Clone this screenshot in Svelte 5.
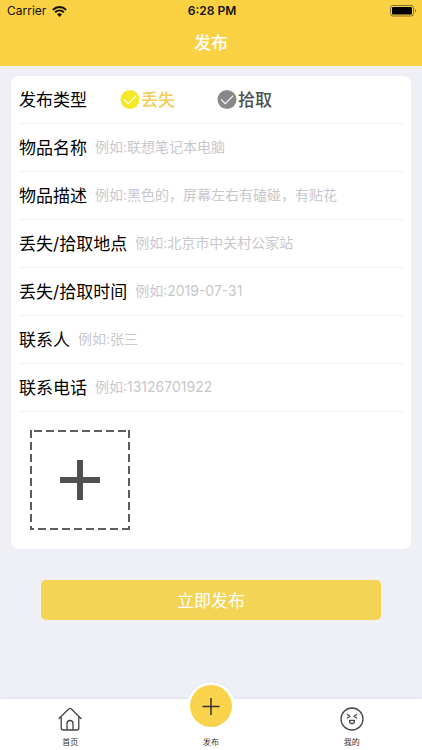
<script>
  const fields = [
    { id: 'name', label: '物品名称', hint: '例如:联想笔记本电脑' },
    { id: 'description', label: '物品描述', hint: '例如:黑色的，屏幕左右有磕碰，有贴花' },
    { id: 'place', label: '丢失/拾取地点', hint: '例如:北京市中关村公家站' },
    { id: 'date', label: '丢失/拾取时间', hint: '例如:2019-07-31' },
    { id: 'contact', label: '联系人', hint: '例如:张三' },
    { id: 'phone', label: '联系电话', hint: '例如:13126701922' }
  ];
  const kinds = [
    { id: 'lost', label: '丢失' },
    { id: 'found', label: '拾取' }
  ];
  let kind = $state('lost');
  let values = $state({ name: '', description: '', place: '', date: '', contact: '', phone: '' });
</script>

<div class="page">
  <header>
    <div class="status">
      <div class="carrier">
        <span>Carrier</span>
        <svg width="15" height="11" viewBox="0 0 15 11" aria-hidden="true">
          <path d="M.8 3.9C4.7.1 10.3.1 14.2 3.9M3.1 6.3c2.6-2.4 6.2-2.4 8.8 0" fill="none" stroke="#111" stroke-width="2" />
          <path d="M5 8.3c1.5-1.3 3.5-1.3 5 0L7.500 10.900z" fill="#111" />
        </svg>
      </div>
      <time>6:28 PM</time>
      <div class="battery">
        <svg width="27" height="12" viewBox="0 0 27 12" aria-hidden="true">
          <rect x=".5" y=".5" width="23" height="10.500" rx="2.500" fill="none" stroke="#85712a" />
          <rect x="2" y="2" width="20" height="7.500" rx="1" fill="#000" />
          <path d="M25 4c1.600.500 1.600 3 0 3.500z" fill="#85712a" />
        </svg>
      </div>
    </div>
    <h1>发布</h1>
  </header>

  <main>
    <form onsubmit={(e) => e.preventDefault()}>
      <div class="card">
        <div class="row" role="radiogroup" aria-labelledby="kind-title">
          <span class="title" id="kind-title">发布类型</span>
          <div class="kinds">
            {#each kinds as k}
              <label class="kind" class:on={kind === k.id}>
                <input type="radio" name="kind" value={k.id} bind:group={kind} />
                <svg width="20" height="20" viewBox="0 0 20 20" aria-hidden="true">
                  <circle cx="10" cy="9.500" r="9.500" fill="currentColor" />
                  <path d="M4 9.300l4.300 4.300 7.900-8" fill="none" stroke="#fff" stroke-width="1.100" />
                </svg>
                <span>{k.label}</span>
              </label>
            {/each}
          </div>
        </div>
        {#each fields as f}
          <div class="row">
            <label class="title" for={f.id}>{f.label}</label>
            <input class="text" id={f.id} type="text" placeholder={f.hint} bind:value={values[f.id]} />
          </div>
        {/each}
        <button class="upload" type="button" aria-label="添加图片">
          <svg width="100" height="100" viewBox="0 0 100 100" aria-hidden="true">
            <g fill="none" stroke="#5c5c5c" stroke-width="2">
              <path d="M4 1H99" stroke-dasharray="8 4" />
              <path d="M1 0V99M99 0V99" stroke-dasharray="8 4" />
              <path d="M0 99H4M8 99H100" stroke-dasharray="8 4" />
            </g>
            <path d="M30 50H70M50 30V70" stroke="#505050" stroke-width="6" />
          </svg>
        </button>
      </div>
      <button class="submit" type="submit">立即发布</button>
    </form>
  </main>

  <nav>
    <a href="#home">
      <svg width="24" height="24" viewBox="0 0 24 24" aria-hidden="true">
        <path d="M1 11.500L10.700 2q1.300-1.200 2.600 0L23 11.500M3.200 10V21q0 2 2 2H18.800q2 0 2-2V10M9 23V16.500a3 3 0 0 1 6 0V23" fill="none" stroke="#444" stroke-width="1.300" stroke-linecap="round" stroke-linejoin="round" />
      </svg>
      <span>首页</span>
    </a>
    <a class="publish" href="#publish" aria-current="page">
      <svg width="50" height="50" viewBox="0 0 50 50" aria-hidden="true">
        <circle cx="25" cy="25" r="24" fill="#fff" />
        <path d="M1.800 17A24.500 24.500 0 0 1 48.200 17" fill="none" stroke="#e6e7ed" />
        <circle cx="25" cy="25" r="21" fill="#fad34c" />
        <path d="M16.500 25.500H33.500M25 17V34" stroke="#333" stroke-width="1.500" />
      </svg>
      <span>发布</span>
    </a>
    <a href="#mine">
      <svg width="24" height="24" viewBox="0 0 24 24" aria-hidden="true">
        <g fill="none" stroke="#444" stroke-width="1.300" stroke-linecap="round" stroke-linejoin="round">
          <circle cx="12" cy="12" r="11" />
          <path d="M7.300 7.500L10 9.300 7.300 11M16.700 7.500L14 9.300 16.700 11M9.600 13.300H14.400V14.300a2.400 2.400 0 0 1-4.800 0z" />
        </g>
      </svg>
      <span>我的</span>
    </a>
  </nav>
</div>

<style>
  :global(body) {
    margin: 0;
  }
  .page {
    display: flex;
    flex-direction: column;
    min-height: 100vh;
    background: #eff0f6;
    color: #111;
    font-family: Inter, 'Noto Sans CJK SC', sans-serif;
  }
  button,
  input {
    font-family: inherit;
  }
  header {
    background: #fad143;
    height: 66px;
  }
  .status {
    display: grid;
    grid-template-columns: 1fr auto 1fr;
    align-items: center;
    height: 22px;
    padding: 0 5px 0 7px;
    font-size: 12px;
    line-height: 22px;
  }
  .carrier {
    display: flex;
    align-items: center;
    gap: 6px;
  }
  time {
    font-weight: 600;
  }
  .battery {
    display: flex;
    justify-content: flex-end;
  }
  h1 {
    margin: 0;
    color: #fff;
    font-size: 17px;
    font-weight: 500;
    line-height: 42px;
    text-align: center;
  }
  main {
    flex: 1;
    padding: 10px 11px 24px;
  }
  .card {
    padding: 0 8px;
    background: #fff;
    border-radius: 8px;
  }
  .row {
    display: flex;
    align-items: center;
    box-sizing: border-box;
    height: 48px;
    border-bottom: 1px solid #f2f2f4;
  }
  .title {
    flex: none;
    color: #000;
    font-size: 17px;
    line-height: 24px;
  }
  .text {
    flex: 1;
    min-width: 0;
    padding: 0 0 2px 8px;
    border: 0;
    outline: 0;
    background: none;
    font-size: 14px;
    line-height: 24px;
  }
  .text::placeholder {
    color: #c7c7cc;
    opacity: 1;
  }
  .kinds {
    display: flex;
    gap: 42px;
    padding-left: 33px;
  }
  .kind {
    position: relative;
    display: flex;
    align-items: center;
    gap: 1px;
    color: #888;
    font-size: 17px;
    font-weight: 500;
    line-height: 24px;
  }
  .kind span {
    color: #505050;
  }
  .kind.on {
    color: #f5e829;
  }
  .kind.on span {
    color: #f3cd55;
  }
  .kind input {
    position: absolute;
    width: 20px;
    height: 20px;
    margin: 0;
    opacity: 0;
  }
  .upload {
    display: block;
    padding: 18px 11px 19px;
    border: 0;
    background: none;
  }
  .upload svg {
    display: block;
  }
  .submit {
    display: block;
    width: calc(100% - 60px);
    height: 40px;
    margin: 31px auto 0;
    padding: 1px 0 0;
    border: 0;
    border-radius: 5px;
    background: #f3d455;
    color: #fff;
    font-size: 17px;
    line-height: 40px;
  }
  nav {
    display: flex;
    height: 51px;
    background: #fff;
    box-shadow: 0 -1px 2px #e2e3e9;
  }
  nav a {
    display: flex;
    flex: 1;
    flex-direction: column;
    align-items: center;
    justify-content: flex-end;
    gap: 5px;
    padding-bottom: 1px;
    color: #333;
    font-size: 8px;
    line-height: 13px;
    text-decoration: none;
  }
  nav svg {
    flex: none;
  }
</style>
